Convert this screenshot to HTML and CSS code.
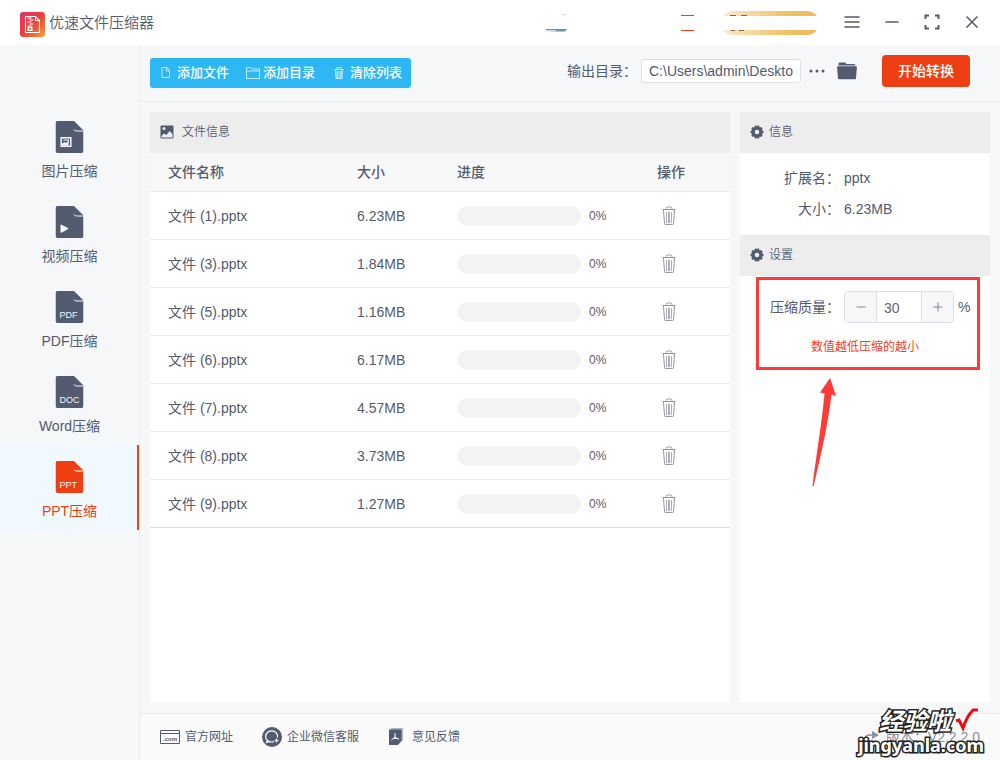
FILE: index.html
```html
<!DOCTYPE html>
<html lang="zh-CN">
<head>
<meta charset="utf-8">
<title>优速文件压缩器</title>
<link rel="stylesheet" href="styles.css">
</head>
<body>
<svg class="defs" aria-hidden="true">
  <defs>
    <linearGradient id="logo-fill" x1="0" y1="0" x2="1" y2="1">
      <stop offset="0" stop-color="#e8306a"/><stop offset=".5" stop-color="#ea4038"/><stop offset="1" stop-color="#f6a13a"/>
    </linearGradient>
    <symbol id="doc" viewBox="0 0 28 32">
      <path fill="currentColor" d="M2 0H18.500L28 9.500V30a2 2 0 0 1-2 2H2a2 2 0 0 1-2-2V2a2 2 0 0 1 2-2z"/>
      <path fill="none" stroke="#f5f7f9" stroke-width="1" d="M18.500 8.500c.5 1 1.500 1.500 3 1.500h6"/>
    </symbol>
    <symbol id="trash" viewBox="0 0 14 20">
      <path fill="none" stroke="#8f96a6" stroke-width="1" d="M.5 3.500h13M4 3.500V2.500a1.500 1.500 0 0 1 1.500-1.500h3a1.500 1.500 0 0 1 1.500 1.500v1M1.500 4l1 13.500a1 1 0 0 0 1 1h7a1 1 0 0 0 1-1L12.500 4"/>
      <path stroke="#a9afbb" stroke-width="1" d="M4.500 6v11M6.500 6v11M7.500 6v11M9.500 6v11"/>
    </symbol>
    <symbol id="gear" viewBox="0 0 14 14">
      <path fill="currentColor" fill-rule="evenodd" d="M5 .5h1.200l.8.800.8-.8H9l.6 2 1.600-.5 1.500 1.800-.8 1.500 1.600.7v2l-1.600.7.8 1.500-1.500 1.800-1.600-.5-.6 2H7.800L7 12.700l-.8.800H5l-.6-2-1.600.5-1.500-1.800.8-1.500L.5 8V6l1.600-.7-.8-1.500L2.800 2l1.600.5zM7 4.700a2.300 2.300 0 1 0 0 4.600 2.300 2.300 0 0 0 0-4.600z"/>
    </symbol>
  </defs>
</svg>

<div class="app">
  <header class="titlebar">
    <svg class="logo" viewBox="0 0 25 25" aria-hidden="true">
      <rect width="25" height="25" rx="3" fill="url(#logo-fill)"/>
      <path fill="none" stroke="#fff" stroke-width="1.100" d="M5.500 4.500h10l4 4v12h-14zM15.500 4.500v4h4"/>
      <path stroke="#fff" stroke-width="1.200" d="M7.500 6h4M9.500 8h4M7.500 10h4M9.500 12h4M7.500 14h4"/>
      <path fill="#fff" fill-rule="evenodd" d="M7.500 14.500h5v4.500h-5zM9 16.300v1.400h2v-1.400z"/>
    </svg>
    <h1 class="app-name">优速文件压缩器</h1>
    <div class="account" aria-hidden="true">
      <svg class="avatar" viewBox="0 0 22 20"><path fill="#5b9ca5" d="M0 16h21l-2 2.500H10L0 18z"/><path fill="#c8dfe2" d="M0 17h10v1H0z"/><path fill="#ddd" d="M15 1h5v1h-5z"/></svg>
      <svg class="badge" viewBox="0 0 14 18"><path fill="#ee3f14" d="M0 1h13v1H0zM0 16h13v1H0z"/></svg>
      <svg class="vip" viewBox="0 0 98 24">
        <defs><linearGradient id="gold"><stop offset="0" stop-color="#fcebd0"/><stop offset=".7" stop-color="#efbf60"/><stop offset="1" stop-color="#eeba5c"/></linearGradient></defs>
        <rect width="98" height="24" rx="12" fill="url(#gold)"/><path fill="#fff" d="M0 5h98v14H0z"/>
        <path stroke="#8a6650" stroke-width="1" d="M9 4.500h6M20 4.500h6M10 19.500h4M18 19.500h5"/>
      </svg>
    </div>
    <div class="window-controls">
      <button type="button" aria-label="菜单"><svg viewBox="0 0 16 16"><path d="M.5 3h15M.5 8h15M.5 13h15"/></svg></button>
      <button type="button" aria-label="最小化"><svg viewBox="0 0 16 16"><path d="M1.500 8h13"/></svg></button>
      <button type="button" aria-label="最大化"><svg viewBox="0 0 16 16"><path stroke-width="2" d="M1.500 5V1.500H5M11 1.500h3.500V5M14.500 11v3.500H11M5 14.500H1.500V11"/></svg></button>
      <button type="button" aria-label="关闭"><svg viewBox="0 0 16 16"><path d="M2.500 2.500l11 11M13.500 2.500l-11 11"/></svg></button>
    </div>
  </header>

  <nav class="sidebar">
    <a class="nav-item" href="#image"><svg viewBox="0 0 28 32"><use href="#doc"/><path fill="none" stroke="#f5f7f9" stroke-width="1.500" d="M5.700 16.700h9.600v8.600H5.700z"/><path fill="#f5f7f9" d="M6 24.500v-1.500l3-2 1.500 1 2.500-2v4.500zM8 18.500h5.500V22L12 19.500H8z"/></svg><span>图片压缩</span></a>
    <a class="nav-item" href="#video"><svg viewBox="0 0 28 32"><use href="#doc"/><path fill="#f5f7f9" d="M5 19.500q0-1 1-.7l6.500 3.300q.8.500 0 1L6 26.700q-1 .4-1-.7z"/></svg><span>视频压缩</span></a>
    <a class="nav-item" href="#pdf"><svg viewBox="0 0 28 32"><use href="#doc"/><text class="doc-type" x="4" y="27">PDF</text></svg><span>PDF压缩</span></a>
    <a class="nav-item" href="#word"><svg viewBox="0 0 28 32"><use href="#doc"/><text class="doc-type" x="4" y="27">DOC</text></svg><span>Word压缩</span></a>
    <a class="nav-item active" href="#ppt" aria-current="page"><svg viewBox="0 0 28 32"><use href="#doc"/><text class="doc-type" x="4" y="27">PPT</text></svg><span>PPT压缩</span></a>
  </nav>

  <div class="toolbar">
    <div class="file-actions">
      <button type="button"><svg width="10" height="14" viewBox="0 0 10 14"><path d="M1 1.500h5l2.500 3v7H1zM5.500 1.500V5h3"/></svg>添加文件</button>
      <button type="button"><svg width="14" height="14" viewBox="0 0 14 14"><path d="M.5 12.500v-11H5l1 1.500h7.500v9.500zM.5 5h13"/></svg>添加目录</button>
      <button type="button" class="clear"><svg width="10" height="14" viewBox="0 0 10 14"><path d="M.5 3.500h9M3 3V1.500h4V3M1.500 4l.5 8.500h6L8.500 4M4 5v7M6 5v7M3 5v7M7 5v7"/></svg>清除列表</button>
    </div>
    <div class="output">
      <label for="outdir">输出目录：</label>
      <input id="outdir" type="text" value="C:\Users\admin\Desktop">
      <button type="button" class="icon-button more" aria-label="选择目录"><svg viewBox="0 0 16 4"><circle cx="2" cy="2" r="1.500"/><circle cx="8" cy="2" r="1.500"/><circle cx="14" cy="2" r="1.500"/></svg></button>
      <button type="button" class="icon-button folder" aria-label="打开目录"><svg viewBox="0 0 20 18"><path d="M1.500 3V1.500Q1.500.5 2.500.5H8L9.500 2H17q1.500 0 1.500 1.500H1.500z"/><path d="M.8 4.300h18.400q.8 0 .7.700l-.9 11.500q-.1.800-1 .8H2q-.9 0-1-.8L.1 5q0-.7.700-.7z"/></svg></button>
      <button type="button" class="start">开始转换</button>
    </div>
  </div>

  <main class="workspace">
    <section class="panel files">
      <h2 class="panel-title"><svg width="14" height="14" viewBox="0 0 14 14"><path fill="currentColor" fill-rule="evenodd" d="M1.500.5h11a1 1 0 0 1 1 1v11a1 1 0 0 1-1 1h-11a1 1 0 0 1-1-1v-11a1 1 0 0 1 1-1zM4 2a1.500 1.500 0 1 0 0 3 1.500 1.500 0 0 0 0-3zM1.500 12.500h11V9L9.500 6l-3 4L4 8.500l-2.500 2.500z"/></svg><span>文件信息</span></h2>
      <table class="file-table">
        <colgroup><col class="col-name"><col class="col-size"><col class="col-progress"><col></colgroup>
        <thead><tr><th scope="col">文件名称</th><th scope="col">大小</th><th scope="col">进度</th><th scope="col">操作</th></tr></thead>
        <tbody>
          <tr><td>文件 (1).pptx</td><td>6.23MB</td><td><div class="progress"><span class="bar"></span><span>0%</span></div></td><td><button type="button" class="remove" aria-label="删除"><svg><use href="#trash"/></svg></button></td></tr>
          <tr><td>文件 (3).pptx</td><td>1.84MB</td><td><div class="progress"><span class="bar"></span><span>0%</span></div></td><td><button type="button" class="remove" aria-label="删除"><svg><use href="#trash"/></svg></button></td></tr>
          <tr><td>文件 (5).pptx</td><td>1.16MB</td><td><div class="progress"><span class="bar"></span><span>0%</span></div></td><td><button type="button" class="remove" aria-label="删除"><svg><use href="#trash"/></svg></button></td></tr>
          <tr><td>文件 (6).pptx</td><td>6.17MB</td><td><div class="progress"><span class="bar"></span><span>0%</span></div></td><td><button type="button" class="remove" aria-label="删除"><svg><use href="#trash"/></svg></button></td></tr>
          <tr><td>文件 (7).pptx</td><td>4.57MB</td><td><div class="progress"><span class="bar"></span><span>0%</span></div></td><td><button type="button" class="remove" aria-label="删除"><svg><use href="#trash"/></svg></button></td></tr>
          <tr><td>文件 (8).pptx</td><td>3.73MB</td><td><div class="progress"><span class="bar"></span><span>0%</span></div></td><td><button type="button" class="remove" aria-label="删除"><svg><use href="#trash"/></svg></button></td></tr>
          <tr><td>文件 (9).pptx</td><td>1.27MB</td><td><div class="progress"><span class="bar"></span><span>0%</span></div></td><td><button type="button" class="remove" aria-label="删除"><svg><use href="#trash"/></svg></button></td></tr>
        </tbody>
      </table>
    </section>

    <aside class="panel details">
      <h2 class="panel-title compact"><svg width="14" height="14"><use href="#gear"/></svg><span>信息</span></h2>
      <dl class="info">
        <dt>扩展名：</dt><dd>pptx</dd>
        <dt>大小：</dt><dd>6.23MB</dd>
      </dl>
      <h2 class="panel-title compact"><svg width="14" height="14"><use href="#gear"/></svg><span>设置</span></h2>
      <div class="settings">
        <div class="quality">
          <label for="quality">压缩质量：</label>
          <div class="stepper">
            <button type="button" aria-label="减小"><svg viewBox="0 0 10 10"><path d="M.5 5h9"/></svg></button>
            <input id="quality" type="text" inputmode="numeric" value="30">
            <button type="button" aria-label="增大"><svg viewBox="0 0 10 10"><path d="M.5 5h9M5 .5v9"/></svg></button>
          </div>
          <span class="unit">%</span>
        </div>
        <p class="hint">数值越低压缩的越小</p>
        <svg class="arrow" viewBox="0 0 24 112" aria-hidden="true"><path fill="#fc3a38" d="M18 1l6 18-4.500-1.500C16 48 8 82 1.500 109.500L.5 109C4 80 10 45 12.500 16.500L8 15.500z"/></svg>
      </div>
    </aside>
  </main>

  <footer class="footer">
    <a href="#site"><svg width="20" height="16" viewBox="0 0 20 16"><path fill="none" stroke="currentColor" d="M.5 1.500h19v13H.5zM.5 4.500h19"/><text class="dot-com" x="3" y="12">.com</text></svg>官方网址</a>
    <a href="#service"><svg width="20" height="20" viewBox="0 0 20 20"><circle cx="10" cy="10" r="10" fill="currentColor"/><path fill="none" stroke="#fff" stroke-width="1.200" d="M12 14.500a6 5.500 0 1 1 3.500-4M5.500 13l-1 2.500 3-1"/><path fill="#fff" d="M14.500 11l.8 1.700 1.700.8-1.700.8-.8 1.700-.8-1.700-1.700-.8 1.700-.8z"/></svg>企业微信客服</a>
    <a href="#feedback" class="feedback"><svg width="16" height="18" viewBox="0 0 16 18"><path fill="#aeb4c1" d="M3 0h12v13h-2V2H3z"/><path fill="currentColor" d="M1 1.500h12.500V13L10 17H1z"/><path fill="none" stroke="#fff" d="M7 5v4l-3.500 3M7 9l4 2.500M5 10.500h4"/></svg>意见反馈</a>
    <span class="version"><svg width="18" height="14" viewBox="0 0 18 14"><path fill="none" stroke="currentColor" stroke-width="1.500" d="M1 11V9q0-4 5-4h3"/><path fill="currentColor" d="M8 1l7 4-7 4z"/></svg>版本：V2.2.2.0</span>
  </footer>

  <div class="watermark">
    <div class="watermark-name"><span>经验啦</span><svg width="24" height="24" viewBox="0 0 24 24"><path fill="none" stroke="#f00a0a" stroke-width="3" d="M1 13l3-1 4 8Q12 8 18 2h5"/></svg></div>
    <div class="watermark-url">jingyanla.com</div>
  </div>
</div>
</body>
</html>
```
FILE: styles.css
```css
* { box-sizing: border-box; }

body {
  margin: 0;
  color: #535b70;
  background: #f5f7f9;
  font: 14px/20px "Liberation Sans", "Noto Sans CJK SC", sans-serif;
}

h1, h2, p, dl, dd { margin: 0; }
a { color: inherit; text-decoration: none; }
button, input { margin: 0; font: inherit; color: inherit; }
button { padding: 0; border: 0; background: none; cursor: pointer; }
svg { flex: none; }

.defs { position: absolute; width: 0; height: 0; }

.app {
  position: relative;
  display: grid;
  grid-template: 45px 57px 1fr 47px / 140px 1fr;
  min-height: 100vh;
}

/* Title bar */
.titlebar {
  grid-column: 1 / -1;
  display: flex;
  align-items: center;
  padding: 0 20px;
  background: #fff;
}
.logo { width: 25px; height: 25px; margin-top: 3px; }
.app-name { margin-left: 4px; font-size: 15px; font-weight: 350; }
.account { display: flex; align-items: center; margin-left: auto; }
.avatar { width: 22px; height: 20px; }
.badge { width: 14px; height: 18px; margin-left: 113px; }
.vip { width: 98px; height: 24px; margin-left: 26px; }
.window-controls { display: flex; gap: 24px; margin-left: 25px; padding-bottom: 2px; }
.window-controls button { width: 16px; height: 16px; }
.window-controls svg { display: block; fill: none; stroke: #535b70; stroke-width: 1.5; }

/* Sidebar */
.sidebar {
  grid-row: 2 / -1;
  padding-top: 60px;
  border-right: 1px solid #eaecef;
}
.nav-item {
  display: flex;
  flex-direction: column;
  align-items: center;
  gap: 8px;
  height: 85px;
  padding-top: 16px;
}
.nav-item svg { width: 29px; height: 32px; }
.nav-item.active {
  color: #ee3f14;
  background: #f0f9ff;
  box-shadow: inset -2px 0 #ee3f14;
}
.doc-type { fill: #f5f7f9; font-size: 9px; }

/* Toolbar */
.toolbar {
  display: flex;
  justify-content: space-between;
  align-items: center;
  padding: 0 30px 0 10px;
  border-bottom: 1px solid #eaecef;
}
.file-actions {
  display: flex;
  gap: 17px;
  height: 30px;
  padding: 0 9px 0 11px;
  border-radius: 3px;
  color: #fff;
  background: #2db7f5;
}
.file-actions button {
  display: flex;
  align-items: center;
  gap: 3px;
  font-size: 13px;
  font-weight: 500;
}
.file-actions button:first-child { gap: 6px; }
.file-actions .clear { gap: 6px; padding-left: 2px; }
.file-actions svg { fill: none; stroke: #c3eafd; }
.output { display: flex; align-items: center; padding-bottom: 4px; }
.output input {
  width: 160px;
  height: 24px;
  padding: 0 7px;
  border: 1px solid #dcdfe6;
  border-radius: 3px;
  background: #fff;
}
.output label { margin-right: 4px; }
.icon-button svg { display: block; width: 100%; fill: #535b70; }
.more { width: 16px; margin-left: 8px; }
.folder { width: 20px; margin-left: 12px; }
.start {
  width: 88px;
  height: 32px;
  margin-left: 25px;
  border-radius: 4px;
  color: #fff;
  background: #ee3f14;
  font-weight: 500;
}

/* Workspace */
.workspace {
  display: grid;
  grid-template-columns: 1fr 250px;
  gap: 10px;
  padding: 10px 10px 11px;
}
.panel { background: #fff; }
.panel-title {
  display: flex;
  align-items: center;
  gap: 8px;
  height: 41px;
  padding: 0 10px 2px;
  background: #ededed;
  font-size: 12px;
  font-weight: 350;
}
.panel-title.compact { gap: 5px; }

.file-table {
  width: 100%;
  table-layout: fixed;
  border-spacing: 0;
}
.col-name { width: 189px; }
.col-size { width: 100px; }
.col-progress { width: 200px; }
.file-table th, .file-table td {
  height: 48px;
  padding: 0 0 0 18px;
  border-bottom: 1px solid #e8eaec;
  text-align: left;
}
.file-table th { height: 39px; background: #f8f8f9; font-weight: 500; }
.file-table tbody tr:last-child td { border-color: #d7dade; }
.progress { display: flex; align-items: center; gap: 8px; font-size: 12px; }
.bar { width: 124px; height: 20px; border-radius: 10px; background: #f3f3f3; }
.remove { display: block; margin-left: 5px; }
.remove svg { display: block; width: 14px; height: 20px; }

/* Details */
.info {
  display: grid;
  grid-template-columns: 100px 1fr;
  gap: 11px 4px;
  padding: 15px 0 16px;
}
.info dt { text-align: right; }
.settings { position: relative; padding: 15px 10px; }
.quality { display: flex; align-items: center; }
.quality label { width: 90px; text-align: right; }
.stepper {
  display: flex;
  width: 110px;
  height: 32px;
  margin-left: 4px;
  border: 1px solid #dcdfe6;
  border-radius: 4px;
  overflow: hidden;
}
.stepper button { display: grid; place-items: center; width: 31px; background: #f7f7f8; }
.stepper svg { width: 10px; height: 10px; stroke: #7d8494; }
.stepper input {
  flex: 1;
  min-width: 0;
  padding: 2px 7px 0;
  border: solid #dcdfe6;
  border-width: 0 1px;
  color: #666;
}
.unit { margin-left: 4px; }
.hint { margin-top: 14px; color: #ee3f14; font-size: 12px; text-align: center; }

/* Red annotation laid over the settings */
.settings::before {
  content: "";
  position: absolute;
  inset: 1px 10px auto 16px;
  height: 87px;
  border: 3px solid #fc3a38;
  pointer-events: none;
}
.arrow { position: absolute; top: 101px; left: 72px; width: 24px; height: 112px; }

/* Footer */
.footer {
  display: flex;
  align-items: center;
  gap: 29px;
  padding: 0 20px;
  border-top: 1px solid #eaecef;
  background: #fafafa;
  font-size: 12px;
}
.footer a { display: flex; align-items: center; gap: 5px; }
.footer .feedback { gap: 8px; }
.dot-com { fill: #535b70; font-size: 6px; font-weight: 700; }
.version { display: flex; align-items: center; gap: 4px; margin-left: auto; font-size: 14px; color: #8b91a0; }

/* Site mark laid over the bottom right corner */
.watermark {
  position: absolute;
  right: 16px;
  bottom: 6px;
  color: #fff;
  font-weight: 700;
  text-align: right;
  pointer-events: none;
}
.watermark-name span, .watermark-url { -webkit-text-stroke: 3px #222; paint-order: stroke fill; }
.watermark-name { display: flex; justify-content: flex-end; gap: 4px; padding-right: 5px; font-size: 24px; line-height: 28px; font-style: italic; }
.watermark-url { font-family: "Noto Sans", sans-serif; font-size: 18px; line-height: 18px; }
```
